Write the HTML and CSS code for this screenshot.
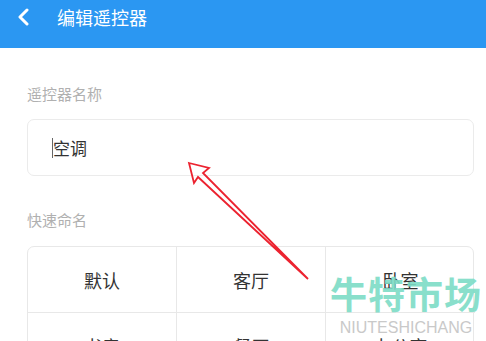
FILE: index.html
```html
<!DOCTYPE html>
<html lang="zh-CN">
<head>
    <meta charset="UTF-8">
    <meta name="viewport" content="width=device-width, initial-scale=1.0">
    <title>编辑遥控器</title>
    <link rel="stylesheet" href="styles.css">
</head>
<body>
<div class="header">
    <svg class="back" width="14" height="20" viewBox="0 0 14 20">
        <polyline points="10,2 3,9 10,16" fill="none" stroke="#fff" stroke-width="3" stroke-linecap="round" stroke-linejoin="round"/>
    </svg>
    <span class="title">编辑遥控器</span>
</div>

<div class="content">
    <div class="label">遥控器名称</div>
    <div class="nameBox">
        <span class="cursor"></span>
        <span class="nameText">空调</span>
    </div>

    <div class="label label2">快速命名</div>
    <div class="grid">
        <div class="cell">默认</div>
        <div class="cell">客厅</div>
        <div class="cell">卧室</div>
        <div class="cell">书房</div>
        <div class="cell">餐厅</div>
        <div class="cell">办公室</div>
    </div>
</div>

<!-- red pointer drawn over the screenshot -->
<svg class="arrow" width="486" height="341" viewBox="0 0 486 341">
    <polygon points="189,163 209,168 203,173 308,279 198,177 194,183" fill="none" stroke="#ec2330" stroke-width="1.8" stroke-linejoin="miter"/>
</svg>

<div class="watermark">
    <div class="wmBig">牛特市场</div>
    <div class="wmSmall">NIUTESHICHANG</div>
</div>
</body>
</html>
```

FILE: styles.css
```css
body {
    margin: 0;
    width: 486px;
    height: 341px;
    overflow: hidden;
    background-color: #ffffff;
    font-family: "Noto Sans CJK SC", "Noto Sans", sans-serif;
    position: relative;
}

.header {
    height: 48px;
    background-color: #2b97f2;
    display: flex;
    align-items: flex-start;
    padding-left: 17px;
    box-sizing: border-box;
}

.back {
    margin-top: 8px;
}

.title {
    color: #ffffff;
    font-size: 18px;
    line-height: 34px;
    margin-left: 26px;
}

.content {
    padding: 0 12px 0 27px;
    display: flex;
    flex-direction: column;
}

.label {
    font-size: 15px;
    line-height: 20px;
    color: #b0b0b0;
    margin-top: 36px;
}

.label2 {
    margin-top: 34px;
}

.nameBox {
    margin-top: 15px;
    height: 57px;
    border: 1px solid #ebebeb;
    border-radius: 7px;
    display: flex;
    align-items: center;
    padding-left: 24px;
    box-sizing: border-box;
}

.cursor {
    width: 1px;
    height: 20px;
    background-color: #666666;
}

.nameText {
    font-size: 17px;
    color: #333333;
}

.grid {
    margin-top: 16px;
    display: grid;
    grid-template-columns: 149px 149px 149px;
    border: 1px solid #e8e8e8;
    border-radius: 7px 7px 0 0;
}

.cell {
    height: 66px;
    display: flex;
    align-items: center;
    justify-content: center;
    font-size: 18px;
    color: #333333;
    border-right: 1px solid #e8e8e8;
    border-bottom: 1px solid #e8e8e8;
    box-sizing: border-box;
}

.cell:nth-child(3n) {
    border-right: none;
}

.arrow {
    position: absolute;
    left: 0;
    top: 0;
}

.watermark {
    position: absolute;
    left: 330px;
    top: 271px;
    width: 152px;
    text-align: center;
}

.wmBig {
    font-size: 37px;
    line-height: 44px;
    font-weight: bold;
    color: #7ddcc6;
    opacity: 0.9;
    letter-spacing: 1px;
}

.wmSmall {
    font-family: "Liberation Sans", Arial, sans-serif;
    font-size: 16px;
    line-height: 18px;
    color: #c9c9c9;
    margin-top: 4px;
}
```
